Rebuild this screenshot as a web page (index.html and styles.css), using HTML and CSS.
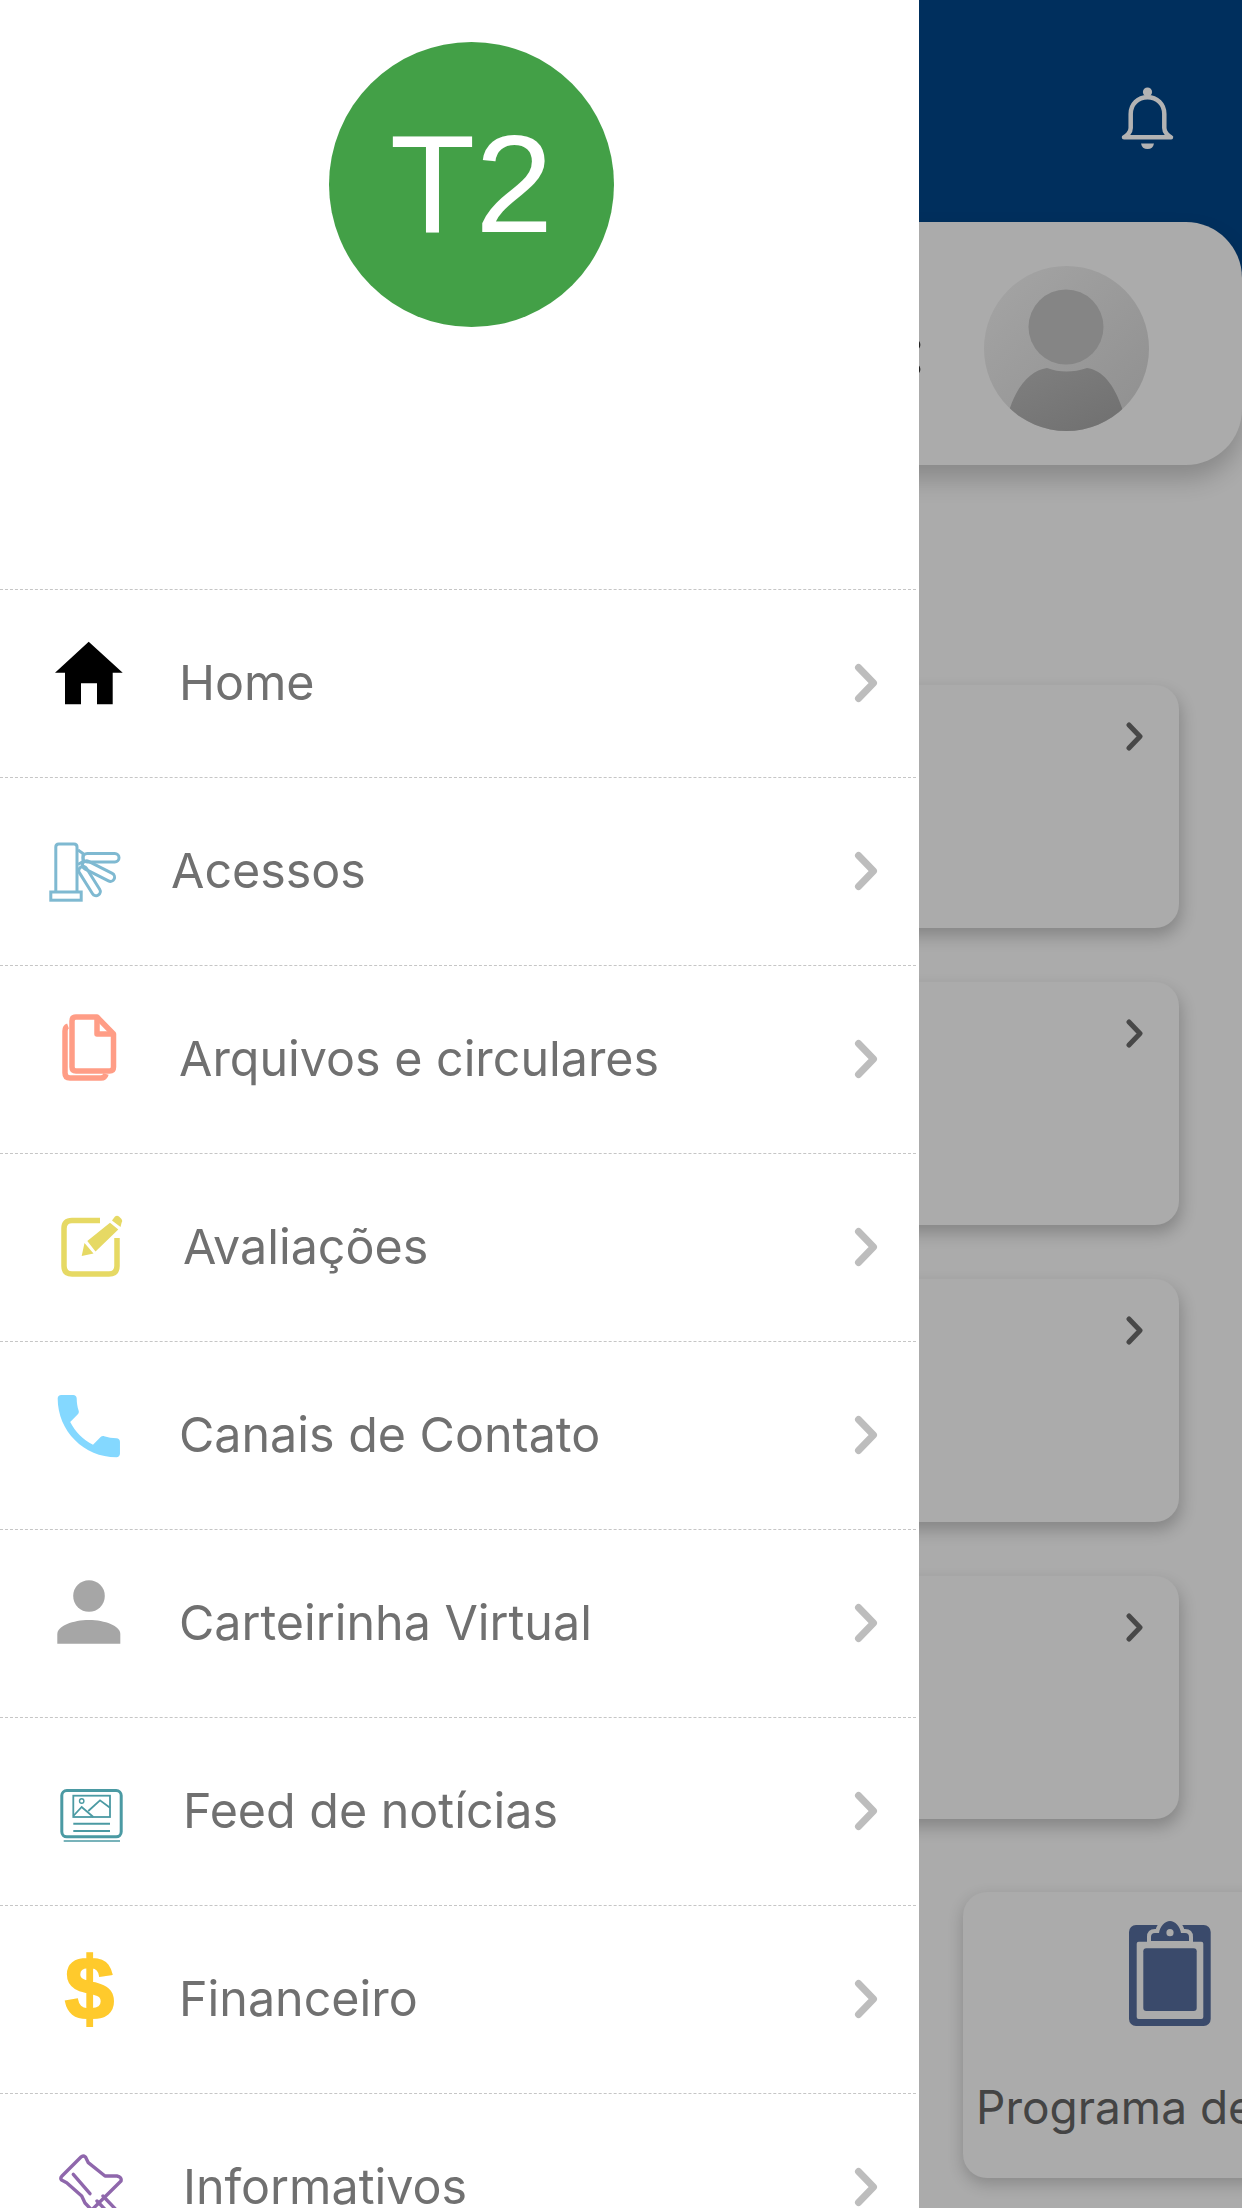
FILE: index.html
```html
<!DOCTYPE html>
<html lang="en">

<head>
    <meta charset="UTF-8">
    <meta name="viewport" content="width=device-width, initial-scale=1.0">
    <title>Menu</title>
    <link rel="stylesheet" href="styles.css">
</head>

<body>

    <div class="screen">

        <nav class="drawer">
            <div class="drawer-top">
                <div class="initials">T2</div>
            </div>

            <a class="row">
                <svg class="row-icon" viewBox="0 0 90 90">
                    <path fill="#000" fill-rule="evenodd" d="M43.7 13.7L77.7 44.7H67.7V76.3H52V55.3H36V76.3H20V44.7H10Z" />
                </svg>
                <span class="label">Home</span>
                <svg class="chev" viewBox="0 0 30 46"><path d="M7.5 7.5L22.5 23L7.5 38.5" /></svg>
            </a>

            <a class="row">
                <svg class="row-icon" viewBox="0 0 90 90" fill="none" stroke="#7fb9d1" stroke-width="3">
                    <path d="M10.8 76V31q0-3 3-3H29q3 0 3 3V76" />
                    <rect x="5.8" y="76" width="30.4" height="8.2" />
                    <rect x="38" y="37.5" width="36" height="8.4" rx="4.2" />
                    <rect x="38" y="43" width="35" height="8.4" rx="4.2" transform="rotate(27 38 47)" />
                    <rect x="36" y="47" width="33" height="8.4" rx="4.2" transform="rotate(58 36 51)" />
                    <path d="M33 34l5 3.5v8l-5 3" />
                </svg>
                <span class="label label-narrow">Acessos</span>
                <svg class="chev" viewBox="0 0 30 46"><path d="M7.5 7.5L22.5 23L7.5 38.5" /></svg>
            </a>

            <a class="row">
                <svg class="row-icon" viewBox="0 0 90 90" fill="none" stroke="#ff9d86" stroke-width="5.5" stroke-linejoin="round">
                    <path d="M31 13H52L68.5 30V63q0 4-4 4H31q-4 0-4-4V17q0-4 4-4Z" />
                    <path d="M52 13V30H68.5" />
                    <path d="M23 22q-3 1-3 5V69q0 5 5 5H56q4 0 5-4" />
                </svg>
                <span class="label">Arquivos e circulares</span>
                <svg class="chev" viewBox="0 0 30 46"><path d="M7.5 7.5L22.5 23L7.5 38.5" /></svg>
            </a>

            <a class="row">
                <svg class="row-icon" viewBox="0 0 90 90">
                    <path fill="none" stroke="#e6d964" stroke-width="5.5" d="M55 28.5H27q-8 0-8 8V74q0 8 8 8H64q8 0 8-8V46" />
                    <path fill="#e6d964" d="M36.7 64L39.5 51L48.5 61.5ZM42.3 49L65 30.7L73.3 37.5L50.5 59.5ZM67 28.5L70 24.5Q72 23 74 24.5L76.5 27Q78 29 76.5 31L75.5 35Z" />
                </svg>
                <span class="label label-wide">Avaliações</span>
                <svg class="chev" viewBox="0 0 30 46"><path d="M7.5 7.5L22.5 23L7.5 38.5" /></svg>
            </a>

            <a class="row">
                <svg class="row-icon" viewBox="0 0 90 90">
                    <path fill="#84d8ff" transform="translate(2.3 4.6) scale(3.46)" d="M6.62 10.79c1.44 2.83 3.76 5.14 6.59 6.59l2.2-2.2c.27-.27.67-.36 1.02-.24 1.12.37 2.33.57 3.57.57.55 0 1 .45 1 1V20c0 .55-.45 1-1 1-9.39 0-17-7.61-17-17 0-.55.45-1 1-1h3.5c.55 0 1 .45 1 1 0 1.25.2 2.45.57 3.57.11.35.03.74-.25 1.02l-2.2 2.2z" />
                </svg>
                <span class="label">Canais de Contato</span>
                <svg class="chev" viewBox="0 0 30 46"><path d="M7.5 7.5L22.5 23L7.5 38.5" /></svg>
            </a>

            <a class="row">
                <svg class="row-icon" viewBox="0 0 90 90" fill="#a6a6a6">
                    <circle cx="44" cy="28" r="15.8" />
                    <path d="M12.3 75.7V66C12.3 58 28 52 44 52S75.3 58 75.3 66V75.7Z" />
                </svg>
                <span class="label">Carteirinha Virtual</span>
                <svg class="chev" viewBox="0 0 30 46"><path d="M7.5 7.5L22.5 23L7.5 38.5" /></svg>
            </a>

            <a class="row">
                <svg class="row-icon" viewBox="0 0 90 90" fill="none" stroke="#4b9aa3">
                    <rect x="16.8" y="34.5" width="59.4" height="46.3" rx="5" stroke-width="3" />
                    <path stroke-width="1.5" d="M18.7 85H75" />
                    <rect x="28.3" y="39.7" width="36.7" height="21.3" stroke-width="1.8" />
                    <path stroke-width="1.8" d="M28.3 60L36.7 51L48.3 61M43.3 55L55 44.3L65 51.7" />
                    <circle cx="36.7" cy="45" r="2.2" stroke-width="1.4" />
                    <path stroke-width="2" d="M28.3 67.7H65M28.3 75H65" />
                </svg>
                <span class="label label-wide">Feed de notícias</span>
                <svg class="chev" viewBox="0 0 30 46"><path d="M7.5 7.5L22.5 23L7.5 38.5" /></svg>
            </a>

            <a class="row">
                <svg class="row-icon row-icon-text" viewBox="0 0 90 90">
                    <text class="dollar" x="44.5" y="75">$</text>
                </svg>
                <span class="label">Financeiro</span>
                <svg class="chev" viewBox="0 0 30 46"><path d="M7.5 7.5L22.5 23L7.5 38.5" /></svg>
            </a>

            <a class="row">
                <svg class="row-icon" viewBox="0 0 90 90" fill="none" stroke="#8f67ac" stroke-width="3.4" stroke-linejoin="round" stroke-linecap="round">
                    <path d="M36 25Q38 23 40.5 25L43.3 30.7L60 44H72Q77 45 76 49L46.7 78L40 71L36.7 64L21.7 50.7L16.5 48Q15 46 17 44Z" />
                    <path d="M28.3 42.3L45 61.7" />
                    <path d="M52 69L72 90M58 64L78 85" />
                </svg>
                <span class="label label-wide">Informativos</span>
                <svg class="chev" viewBox="0 0 30 46"><path d="M7.5 7.5L22.5 23L7.5 38.5" /></svg>
            </a>
        </nav>

        <main class="behind">
            <header class="topbar">
                <svg class="bell" viewBox="0 0 60 66">
                    <path fill="none" stroke="#b3b3b3" stroke-width="4.5" stroke-linejoin="round" d="M12.7 42V28C12.7 18 20 11.3 29.5 11.3S46.3 18 46.3 28V42C46.3 46 50 50 53 51.3H6C9 50 12.7 46 12.7 42Z" />
                    <circle cx="29.5" cy="6" r="4.6" fill="#b3b3b3" />
                    <path fill="#b3b3b3" d="M23 57.5H36Q35 63 29.5 63T23 57.5Z" />
                </svg>
            </header>

            <section class="profile">
                <span class="cut-text">:</span>
                <svg class="avatar" viewBox="0 0 165 165">
                    <defs>
                        <linearGradient id="avatarBg" x1="0" y1="0" x2="1" y2="1">
                            <stop offset="0" stop-color="#a5a5a5" />
                            <stop offset="1" stop-color="#8f8f8f" />
                        </linearGradient>
                        <linearGradient id="avatarBody" x1="0" y1="0" x2="1" y2="1">
                            <stop offset="0" stop-color="#808080" />
                            <stop offset="1" stop-color="#6f6f6f" />
                        </linearGradient>
                        <clipPath id="avatarClip"><circle cx="82.5" cy="82.5" r="82.5" /></clipPath>
                    </defs>
                    <circle cx="82.5" cy="82.5" r="82.5" fill="url(#avatarBg)" />
                    <circle cx="82" cy="61" r="37.5" fill="#858585" />
                    <path clip-path="url(#avatarClip)" fill="url(#avatarBody)" d="M20 165L26 142C34 118 48 104 63 102Q82 109 103 102C118 104 130 118 138 142L145 165Z" />
                </svg>
            </section>

            <div class="tiles">
                <div class="tile"><svg class="tile-chev" viewBox="0 0 22 30"><path d="M3 3L14 14.5L3 26" /></svg></div>
                <div class="tile"><svg class="tile-chev" viewBox="0 0 22 30"><path d="M3 3L14 14.5L3 26" /></svg></div>
                <div class="tile"><svg class="tile-chev" viewBox="0 0 22 30"><path d="M3 3L14 14.5L3 26" /></svg></div>
                <div class="tile"><svg class="tile-chev" viewBox="0 0 22 30"><path d="M3 3L14 14.5L3 26" /></svg></div>
            </div>

            <div class="program">
                <svg class="program-icon" viewBox="0 0 84 108">
                    <rect x="1" y="5" width="81.7" height="101" rx="7" fill="#3a4a6b" />
                    <rect x="8.7" y="21.7" width="66.6" height="77.3" rx="2" fill="#ababab" />
                    <rect x="15.3" y="28.3" width="53.4" height="62.7" rx="3" fill="#3a4a6b" />
                    <path fill="#3a4a6b" stroke="#ababab" stroke-width="8" paint-order="stroke" d="M23 21V17Q23 13 27 13H31C32 6 37 1 42 1S52 6 53 13H57Q61 13 61 17V21Z" />
                    <circle cx="42" cy="12.7" r="3.6" fill="#ababab" />
                </svg>
                <p class="program-text">Programa de</p>
            </div>
        </main>

    </div>

</body>

</html>
```

FILE: styles.css
```css
* {
    box-sizing: border-box;
}

html,
body {
    margin: 0;
    height: 2208px;
    overflow: hidden;
}

body {
    font-family: Inter, "Noto Sans", sans-serif;
}

.screen {
    display: flex;
    width: 1242px;
    height: 2208px;
    overflow: hidden;
}

/* drawer */

.drawer {
    flex: 0 0 919px;
    position: relative;
    z-index: 2;
    background: #fff;
}

.drawer-top {
    height: 589px;
    padding: 42px 0 0 329px;
}

.initials {
    display: flex;
    align-items: center;
    justify-content: center;
    width: 285px;
    height: 285px;
    padding-bottom: 2px;
    border-radius: 50%;
    background: #43a047;
    color: #fff;
    font-family: "Liberation Sans", Arial, sans-serif;
    font-size: 140px;
}

.row {
    display: flex;
    align-items: center;
    height: 188px;
    margin-right: 3px;
    padding: 0 0 2px 45px;
    border-top: 1px dashed #c6c6c6;
}

.row-icon {
    flex: none;
    width: 90px;
    height: 90px;
    margin-bottom: 19px;
}

.row-icon-text {
    overflow: visible;
}

.dollar {
    fill: #ffca2c;
    stroke: #ffca2c;
    stroke-width: 2;
    font-family: "Liberation Sans", Arial, sans-serif;
    font-weight: bold;
    font-size: 89px;
    text-anchor: middle;
}

.label {
    margin-left: 44px;
    color: #707070;
    font-size: 48.4px;
}

.label-narrow {
    margin-left: 36px;
}

.label-wide {
    margin-left: 48px;
}

.chev {
    flex: none;
    width: 30px;
    height: 46px;
    margin-left: auto;
    margin-right: 35px;
}

.chev path {
    fill: none;
    stroke: #bdbdbd;
    stroke-width: 7;
    stroke-linecap: round;
    stroke-linejoin: round;
}

/* page behind the drawer */

.behind {
    flex: 1;
    min-width: 0;
    background: #ababab;
}

.topbar {
    display: flex;
    justify-content: flex-end;
    height: 290px;
    margin-bottom: -68px;
    padding: 86px 64px 0 0;
    background: #002f5d;
}

.bell {
    width: 60px;
    height: 66px;
}

.profile {
    position: relative;
    display: flex;
    justify-content: flex-end;
    height: 243px;
    margin-left: -40px;
    padding: 44px 93px 0 0;
    border-radius: 0 56px 56px 0;
    background: #ababab;
    box-shadow: 0 14px 24px rgba(0, 0, 0, 0.2);
}

.cut-text {
    position: absolute;
    left: 17px;
    top: 97px;
    width: 30px;
    color: #222;
    font-size: 68px;
    line-height: 60px;
    font-weight: bold;
    text-align: right;
}

.avatar {
    width: 165px;
    height: 165px;
}

.tiles {
    display: flex;
    flex-direction: column;
    gap: 54px;
    margin-top: 220px;
}

.tile {
    display: flex;
    justify-content: flex-end;
    width: 300px;
    height: 243px;
    margin-left: -40px;
    padding: 37px 31px 0 0;
    border-radius: 24px;
    background: #ababab;
    box-shadow: 2px 8px 16px rgba(0, 0, 0, 0.22);
}

.tile-chev {
    width: 22px;
    height: 30px;
}

.tile-chev path {
    fill: none;
    stroke: #484848;
    stroke-width: 5;
    stroke-linecap: round;
    stroke-linejoin: round;
}

.program {
    width: 500px;
    height: 286px;
    margin: 73px 0 0 44px;
    padding: 28px 0 0 13px;
    border-radius: 24px;
    background: #ababab;
    box-shadow: 0 6px 16px rgba(0, 0, 0, 0.2);
}

.program-icon {
    display: block;
    width: 84px;
    height: 108px;
    margin-left: 152px;
}

.program-text {
    margin: 51px 0 0;
    color: #444;
    font-size: 46px;
    white-space: nowrap;
}
```
